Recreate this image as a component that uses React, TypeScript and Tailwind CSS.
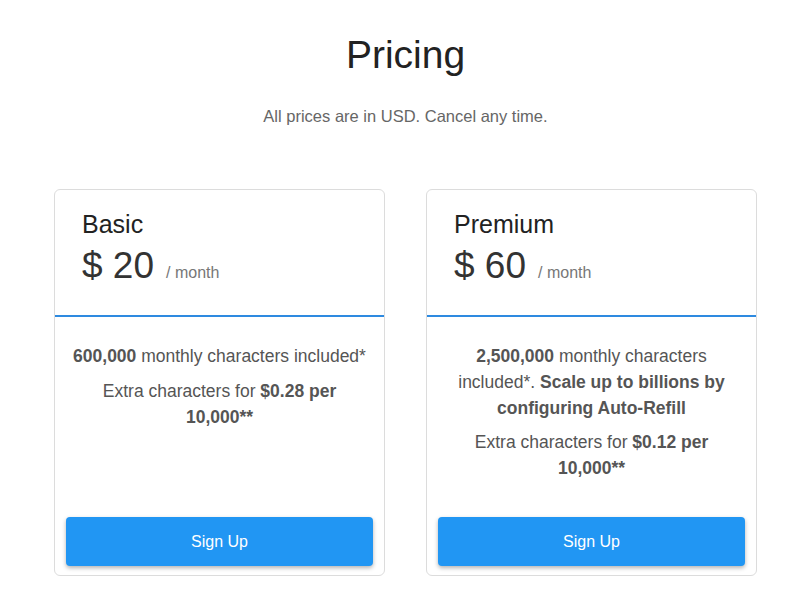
import React from "react";

function Card({
  name,
  price,
  children,
}: {
  name: string;
  price: string;
  children: React.ReactNode;
}) {
  return (
    <div className="flex w-[331px] flex-col rounded-[6px] border border-[#dcdcdc] bg-white">
      <div className="h-[127px] border-b-2 border-[#2e8ae0] px-[27px] pt-[19px]">
        <div className="text-[25px] leading-[30px] text-[#222]">{name}</div>
        <div className="mt-[5px] flex items-baseline">
          <span className="text-[37px] leading-[44px] text-[#333]">$ {price}</span>
          <span className="ml-[12px] text-[16px] text-[#777]">/ month</span>
        </div>
      </div>
      <div className="flex flex-1 flex-col px-[11px] pb-[9px] pt-[26px]">
        <div className="flex-1 px-[4px] text-center text-[17.5px] leading-[26px] text-[#555]">
          {children}
        </div>
        <button className="h-[49px] w-full rounded-[4px] bg-[#2196f3] text-[16px] text-white shadow-[0_2px_4px_rgba(0,0,0,0.3)]">
          Sign Up
        </button>
      </div>
    </div>
  );
}

export default function App() {
  return (
    <div
      className="min-h-[598px] w-[800px] bg-white pl-[11px]"
      style={{ fontFamily: '"Liberation Sans", Arial, sans-serif' }}
    >
      <div className="pt-[30px] text-center">
        <h1 className="text-[39px] leading-[50px] text-[#222]">Pricing</h1>
        <p className="mt-[25px] text-[16.5px] leading-[22px] text-[#666]">
          All prices are in USD. Cancel any time.
        </p>
      </div>
      <div className="mt-[62px] flex h-[387px] justify-center gap-[41px]">
        <Card name="Basic" price="20">
          <p>
            <b>600,000</b> monthly characters included*
          </p>
          <p className="mt-[9px]">
            Extra characters for <b>$0.28 per 10,000**</b>
          </p>
        </Card>
        <Card name="Premium" price="60">
          <p>
            <b>2,500,000</b> monthly characters included*.{" "}
            <b>Scale up to billions by configuring Auto-Refill</b>
          </p>
          <p className="mt-[8px]">
            Extra characters for <b>$0.12 per 10,000**</b>
          </p>
        </Card>
      </div>
    </div>
  );
}
